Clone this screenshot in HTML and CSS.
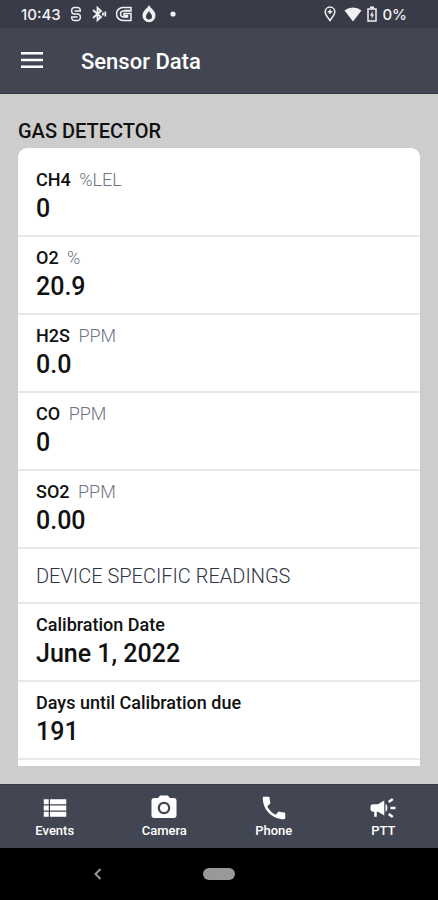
FILE: index.html
```html
<!DOCTYPE html>
<html lang="en">
<head>
<meta charset="UTF-8" />
<meta name="viewport" content="width=device-width, initial-scale=1" />
<title>Sensor Data</title>
<link rel="stylesheet" href="styles.css">
</head>
<body>

<div class="status-bar">
  <span class="clock">10:43</span>
  <div class="status-left">
    <svg width="12" height="16" viewBox="0 0 12 16" fill="none" stroke="currentColor" stroke-width="1.400">
      <path d="M10.300 5V4.300A2.800 2.800 0 0 0 7.500 1.500h-3A2.800 2.800 0 0 0 1.700 4.300v.9A2.800 2.800 0 0 0 4.500 8h3a2.800 2.800 0 0 1 2.800 2.800v.9a2.800 2.800 0 0 1-2.800 2.800h-3a2.800 2.800 0 0 1-2.800-2.800V11M4.500 5H11M1 11h6.500"/>
    </svg>
    <svg width="16" height="16" viewBox="0 0 16 16" fill="none" stroke="currentColor" stroke-width="1.800">
      <path d="M2 4l8 7-3.500 3.200V1.800L10 5l-8 7M12 6.500v3M14.300 5.500v5"/>
    </svg>
    <svg width="16" height="16" viewBox="0 0 16 16" fill="none" stroke="currentColor" stroke-width="1.500">
      <path d="M15 1.500H7a6.500 6.500 0 0 0 0 13h8V7.500H8v2h3.500v1.500H7.500a3 3 0 0 1 0-6H15zM14 4.500H8"/>
    </svg>
    <svg width="16" height="18" viewBox="0 0 16 18" fill="currentColor" fill-rule="evenodd">
      <path d="M8 0c1.500 3.500 6.500 5.500 6.500 10.700A6.500 6.500 0 0 1 1.500 10.700C1.500 5.500 6.500 3.500 8 0zM8 6C7.200 8 5 9 5 11.500a3 3 0 0 0 6 0C11 9 8.800 8 8 6z"/>
    </svg>
    <svg class="dot" width="6" height="6" viewBox="0 0 6 6" fill="currentColor"><circle cx="3" cy="3" r="2.600"/></svg>
  </div>
  <div class="status-right">
    <svg class="pin" width="12" height="16" viewBox="0 0 12 16" fill="none" stroke="currentColor" stroke-width="1.500">
      <path d="M6 14.500C4 11.500 1.200 9 1.200 5.800a4.800 4.800 0 0 1 9.600 0C10.800 9 8 11.500 6 14.500z"/>
      <path d="M6 3.500v4.600M3.700 5.800h4.600"/>
    </svg>
    <svg width="18" height="16" viewBox="0 0 18 16" fill="currentColor">
      <path d="M9 15.500L.5 4.500a13.500 13.500 0 0 1 17 0z"/>
    </svg>
    <svg width="10" height="16" viewBox="0 0 10 16" fill="none" stroke="currentColor" stroke-width="1.500">
      <path d="M1 3h8v12H1z"/>
      <path d="M3 1.500h4" stroke-width="2"/>
      <path d="M5.800 5L3 9.500h1.700V13L7 8.500H5.500z" fill="currentColor" stroke="none"/>
    </svg>
    <span>0%</span>
  </div>
</div>

<header class="app-bar">
  <button class="menu-btn" aria-label="Menu">
    <svg width="22" height="18" viewBox="0 0 22 18" fill="currentColor">
      <path d="M0 0h22v2.500H0zM0 6.700h22v2.500H0zM0 13.400h22v2.500H0z"/>
    </svg>
  </button>
  <h1>Sensor Data</h1>
</header>

<main>
  <h2>Gas Detector</h2>
  <div class="card">
    <div class="reading">
      <div class="label">CH4 <span class="unit">%LEL</span></div>
      <div class="value">0</div>
    </div>
    <div class="reading">
      <div class="label">O2 <span class="unit">%</span></div>
      <div class="value">20.9</div>
    </div>
    <div class="reading">
      <div class="label">H2S <span class="unit">PPM</span></div>
      <div class="value">0.0</div>
    </div>
    <div class="reading">
      <div class="label">CO <span class="unit">PPM</span></div>
      <div class="value">0</div>
    </div>
    <div class="reading">
      <div class="label">SO2 <span class="unit">PPM</span></div>
      <div class="value">0.00</div>
    </div>
    <h3>Device Specific Readings</h3>
    <div class="reading">
      <div class="label">Calibration Date</div>
      <div class="value">June 1, 2022</div>
    </div>
    <div class="reading">
      <div class="label">Days until Calibration due</div>
      <div class="value">191</div>
    </div>
  </div>
</main>

<nav class="tabs">
  <a href="#events">
    <svg width="30" height="30" viewBox="0 0 24 24" fill="currentColor">
      <path d="M3 14h4v-4H3v4zm0 5h4v-4H3v4zM3 9h4V5H3v4zm5 5h13v-4H8v4zm0 5h13v-4H8v4zM8 5v4h13V5H8z"/>
    </svg>
    Events
  </a>
  <a href="#camera">
    <svg width="30" height="30" viewBox="0 0 24 24" fill="currentColor">
      <circle cx="12" cy="12" r="3.200"/>
      <path d="M9 2L7.170 4H4c-1.100 0-2 .9-2 2v12c0 1.100.9 2 2 2h16c1.100 0 2-.9 2-2V6c0-1.100-.9-2-2-2h-3.170L15 2H9zm3 15c-2.760 0-5-2.240-5-5s2.240-5 5-5 5 2.240 5 5-2.240 5-5 5z"/>
    </svg>
    Camera
  </a>
  <a href="#phone">
    <svg width="30" height="30" viewBox="0 0 24 24" fill="currentColor">
      <path d="M6.620 10.790c1.440 2.830 3.760 5.140 6.590 6.590l2.200-2.200c.27-.27.67-.36 1.020-.24 1.120.37 2.330.57 3.570.57.55 0 1 .45 1 1V20c0 .55-.45 1-1 1-9.390 0-17-7.610-17-17 0-.55.45-1 1-1h3.500c.55 0 1 .45 1 1 0 1.250.2 2.450.57 3.570.11.35.03.74-.25 1.020l-2.200 2.200z"/>
    </svg>
    Phone
  </a>
  <a href="#ptt">
    <svg width="30" height="30" viewBox="0 0 24 24" fill="currentColor">
      <path d="M18 11v2h4v-2h-4zm-2 6.610c.96.71 2.210 1.650 3.200 2.390.4-.53.8-1.070 1.200-1.600-.99-.74-2.240-1.680-3.200-2.400-.4.54-.8 1.080-1.200 1.610zM20.400 5.600c-.4-.53-.8-1.070-1.200-1.600-.99.74-2.240 1.680-3.200 2.400.4.53.8 1.070 1.200 1.600.96-.72 2.210-1.650 3.200-2.400zM4 9c-1.100 0-2 .9-2 2v2c0 1.100.9 2 2 2h1v4h2v-4h1l5 3V6L8 9H4zm11.500 3c0-1.330-.58-2.530-1.500-3.350v6.690c.92-.81 1.500-2.010 1.500-3.340z"/>
    </svg>
    PTT
  </a>
</nav>

<div class="system-nav">
  <button class="back" aria-label="Back">
    <svg width="10" height="14" viewBox="0 0 10 14" fill="none" stroke="currentColor" stroke-width="2">
      <path d="M7.500 2l-5 5 5 5"/>
    </svg>
  </button>
  <button class="home" aria-label="Home"></button>
</div>

</body>
</html>
```
FILE: styles.css
```css
* {
  box-sizing: border-box;
}

body {
  font-family: Roboto, "Liberation Sans", sans-serif;
  background: #cdcdcd;
  color: #111;
  display: flex;
  flex-direction: column;
  height: 100vh;
  margin: 0;
}

h1, h2, h3 {
  margin: 0;
}

button {
  padding: 0;
  border: none;
  background: none;
  color: inherit;
  cursor: pointer;
}

svg {
  display: block;
}

/* Android status bar */
.status-bar {
  display: flex;
  align-items: center;
  height: 28px;
  padding: 0 31px 0 21px;
  background: #393c48;
  color: #f2f2f4;
  font-family: Inter, Roboto, sans-serif;
  font-size: 15px;
  font-weight: 500;
}

.status-left {
  display: flex;
  align-items: center;
  gap: 9px;
  margin-left: 9px;
}

.dot {
  margin-left: 4px;
}

.status-right {
  display: flex;
  align-items: center;
  gap: 5px;
  margin-left: auto;
}

.pin {
  margin-right: 3px;
}

.app-bar {
  display: flex;
  align-items: center;
  gap: 38px;
  height: 66px;
  padding: 0 21px;
  background: #424652;
  border-bottom: 1px solid #353844;
  color: #fff;
}

.app-bar h1 {
  font-size: 22px;
  font-weight: 500;
  line-height: 32px;
  padding-top: 2px;
}

/* Readings */
main {
  flex: 1;
  min-height: 0;
  display: flex;
  flex-direction: column;
  padding: 24px 18px 18px;
}

h2 {
  font-size: 20px;
  font-weight: 500;
  line-height: 26px;
  padding-bottom: 4px;
  text-transform: uppercase;
}

.card {
  flex: 1;
  min-height: 0;
  overflow: hidden;
  padding-top: 11px;
  background: #fff;
  border-radius: 9px 9px 0 0;
}

.reading {
  padding: 9px 18px;
  border-bottom: 2px solid #e8e8e8;
}

.label {
  font-size: 18px;
  font-weight: 500;
  line-height: 24px;
}

.unit {
  margin-left: 4px;
  font-weight: 300;
  color: #6c7480;
}

.value {
  font-size: 25px;
  font-weight: 500;
  line-height: 34px;
}

h3 {
  padding: 15px 18px 14px;
  border-bottom: 2px solid #e8e8e8;
  font-size: 20px;
  font-weight: 300;
  line-height: 24px;
  color: #2f3542;
  text-transform: uppercase;
}

.tabs {
  display: flex;
  height: 64px;
  background: #424652;
  border-top: 1px solid #393c48;
}

.tabs a {
  flex: 1;
  display: flex;
  flex-direction: column;
  align-items: center;
  padding-top: 8px;
  color: #fff;
  font-size: 13px;
  font-weight: 500;
  line-height: 16px;
  text-decoration: none;
}

/* Android navigation buttons */
.system-nav {
  display: grid;
  grid-template-columns: 1fr 32px 1fr;
  align-items: center;
  height: 52px;
  background: #000;
  color: #999;
}

.back {
  justify-self: center;
  margin-right: 8px;
}

.home {
  height: 12px;
  border-radius: 6px;
  background: #999;
}
```
